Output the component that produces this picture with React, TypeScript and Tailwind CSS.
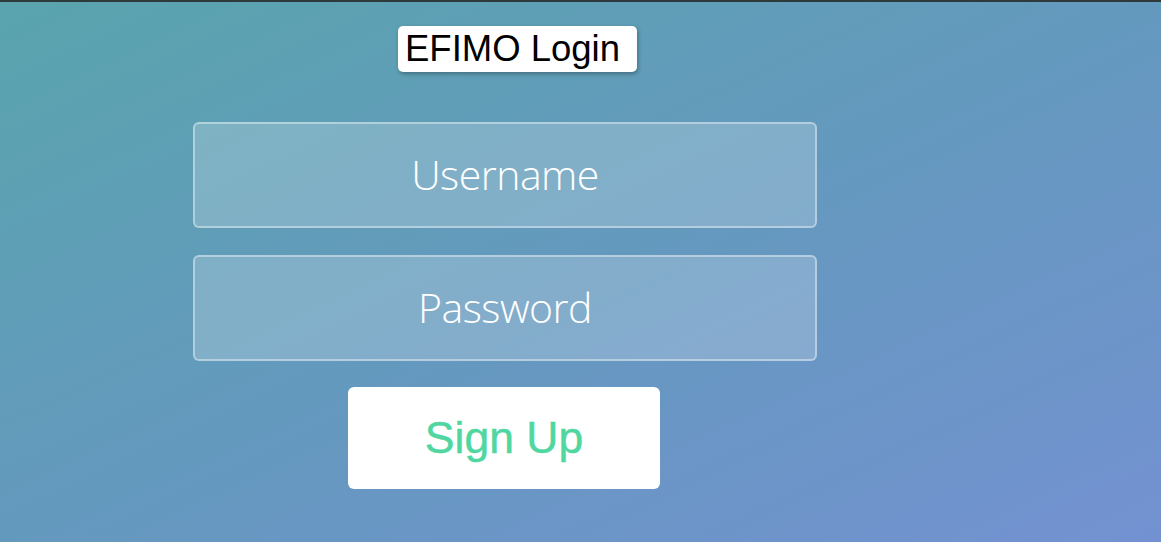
export default function App() {
    return (
        <div className="w-[1161px] h-[542px] overflow-hidden border-t-2 border-[#2f3a3d] bg-gradient-to-br from-[#59a4ad] via-[#6499be] to-[#7391d1]">
            <div className="flex flex-col w-[624px] ml-[193px]">
                {/* Title */}
                <div className="self-start ml-[205px] mt-[24px] h-[46px] w-[239px] flex items-center pl-[7px] bg-white rounded-[5px] shadow-[1px_2px_4px_rgba(0,0,0,0.3)]">
                    <span className="text-[36.5px] leading-none text-black font-['Liberation_Sans',Arial,sans-serif]">
                        EFIMO Login
                    </span>
                </div>

                {/* Fields */}
                <div className="mt-[50px] flex flex-col gap-[27px]">
                    {["Username", "Password"].map((label) => (
                        <div
                            key={label}
                            className="h-[106px] flex items-center justify-center rounded-[6px] border-2 border-white/40 bg-white/20"
                        >
                            <span className="text-[41px] font-light text-white tracking-[-0.5px] font-['Open_Sans','Noto_Sans',sans-serif]">
                                {label}
                            </span>
                        </div>
                    ))}
                </div>

                {/* Sign Up */}
                <button className="self-start ml-[155px] mt-[26px] w-[312px] h-[102px] bg-white rounded-[6px] flex items-center justify-center">
                    <span className="text-[44.5px] leading-none text-[#50d7a1] [-webkit-text-stroke:0.5px_#50d7a1] font-['Liberation_Sans',Arial,sans-serif]">
                        Sign Up
                    </span>
                </button>
            </div>
        </div>
    )
}
